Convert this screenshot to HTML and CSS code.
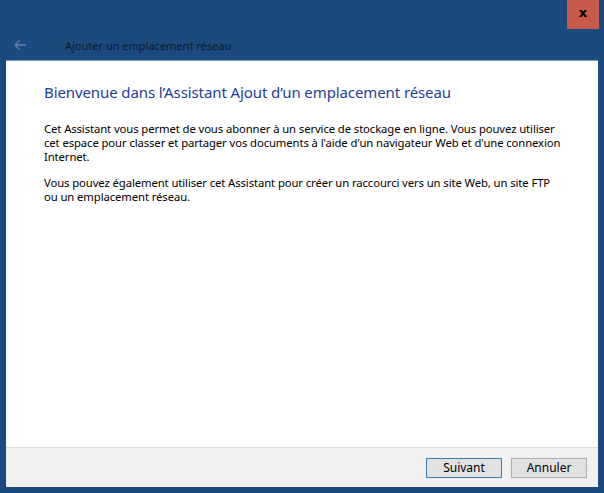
FILE: index.html
```html
<!DOCTYPE html>
<html lang="fr">
<head>
<meta charset="utf-8">
<title>Ajouter un emplacement réseau</title>
<link rel="stylesheet" href="styles.css">
</head>
<body>
<div class="window">
  <div class="caption">
    <div class="close"><span>x</span></div>
  </div>
  <div class="nav">
    <svg class="back" width="14" height="12" viewBox="0 0 14 12"><path d="M13 6H2M6.5 1.5L2 6l4.5 4.5" fill="none" stroke="#5f82ad" stroke-width="1.4"/></svg>
    <span class="title">Ajouter un emplacement réseau</span>
  </div>
  <div class="content">
    <h1 class="heading">Bienvenue dans l’Assistant Ajout d’un emplacement réseau</h1>
    <p class="para">Cet Assistant vous permet de vous abonner à un service de stockage en ligne. Vous pouvez utiliser<br>cet espace pour classer et partager vos documents à l'aide d'un navigateur Web et d'une connexion<br>Internet.</p>
    <p class="para">Vous pouvez également utiliser cet Assistant pour créer un raccourci vers un site Web, un site FTP<br>ou un emplacement réseau.</p>
  </div>
  <div class="footer">
    <button class="btn btn-default">Suivant</button>
    <button class="btn">Annuler</button>
  </div>
</div>
</body>
</html>
```

FILE: styles.css
```css
html, body {
  margin: 0;
  padding: 0;
  background: #1a4a7e;
}
.window {
  width: 604px;
  height: 493px;
  display: flex;
  flex-direction: column;
  font-family: "Noto Sans", "Open Sans", sans-serif;
  font-size: 12px;
  color: #000;
}
.caption {
  height: 29px;
  display: flex;
  justify-content: flex-end;
  padding-right: 5px;
}
.close {
  width: 32px;
  height: 29px;
  background: #c75a4b;
  display: flex;
  align-items: center;
  justify-content: center;
}
.close span {
  font-family: "DejaVu Sans", sans-serif;
  font-weight: bold;
  font-size: 13px;
  line-height: 1;
  margin-top: -4px;
  color: #000;
}
.nav {
  height: 31px;
  display: flex;
  align-items: center;
  padding-left: 13px;
}
.back {
  display: block;
  margin-top: 1px;
}
.title {
  margin-left: 38px;
  color: #101c2c;
  font-size: 11px;
  margin-top: 1px;
}
.content {
  flex: 1;
  margin: 0 6px;
  background: #fff;
  border-top: 1px solid #7d99bb;
  padding: 20px 20px 0 38px;
}
.heading {
  margin: 0 0 19px;
  font-weight: normal;
  font-size: 15px;
  line-height: 22px;
  letter-spacing: -0.1px;
  color: #1e3e9a;
  white-space: nowrap;
}
.para {
  margin: 0 0 12px;
  font-size: 11.3px;
  line-height: 14px;
  letter-spacing: -0.1px;
  white-space: nowrap;
}
.footer {
  height: 39px;
  margin: 0 6px 6px;
  background: #f0f0f0;
  border-top: 1px solid #dfdfdf;
  display: flex;
  justify-content: flex-end;
  align-items: center;
  gap: 9px;
  padding-right: 11px;
}
.btn {
  width: 76px;
  height: 20px;
  padding: 0;
  font-family: "Noto Sans", "Open Sans", sans-serif;
  font-size: 12px;
  color: #000;
  background: #e1e1e1;
  border: 1px solid #adadad;
  border-radius: 0;
}
.btn-default {
  border-color: #3c7fb1;
}
```
